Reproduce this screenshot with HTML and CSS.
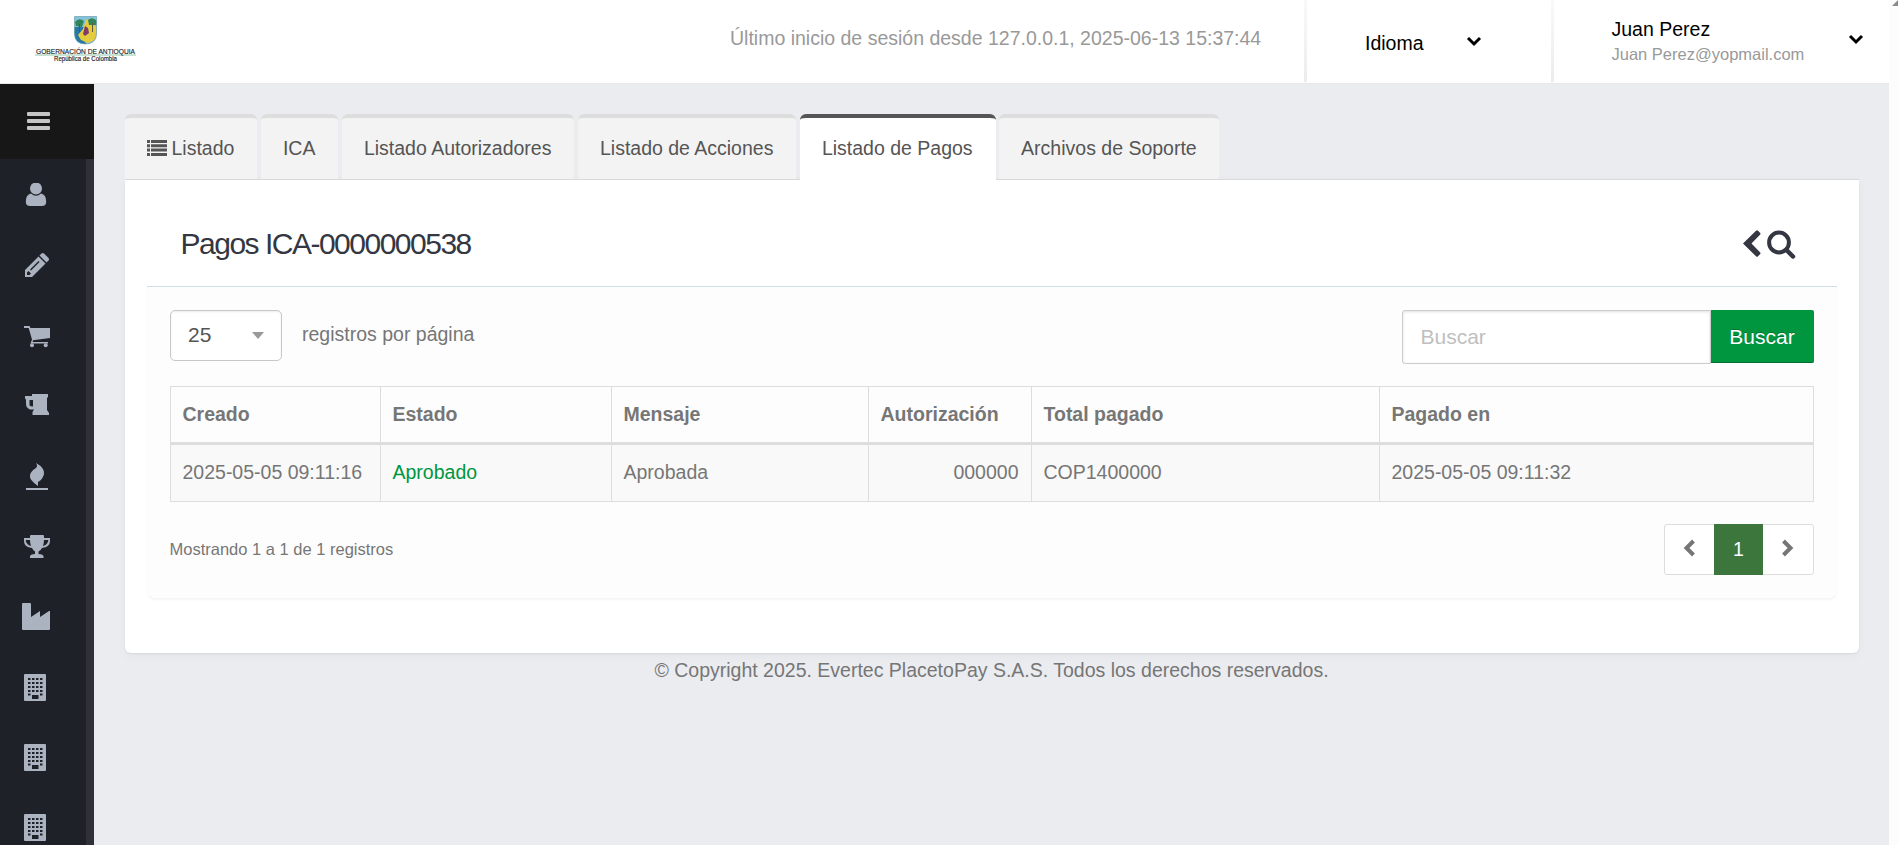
FILE: index.html
```html
<!DOCTYPE html>
<html lang="es">
<head>
<meta charset="utf-8">
<title>Pagos ICA-0000000538</title>
<link rel="stylesheet" href="styles.css">
</head>
<body>
<svg class="defs" width="0" height="0">
  <symbol id="building" viewBox="0 0 22 27">
    <path fill-rule="evenodd" d="M1 0h20q1 0 1 1v25q0 1-1 1H1q-1 0-1-1V1q0-1 1-1zM4 4v2h2.500V4zM8 4v2h2.500V4zM12 4v2h2.500V4zM16 4v2h2.500V4zM4 8v2h2.500V8zM8 8v2h2.500V8zM12 8v2h2.500V8zM16 8v2h2.500V8zM4 12v2h2.500v-2zM8 12v2h2.500v-2zM12 12v2h2.500v-2zM16 12v2h2.500v-2zM4 16v2h2.500v-2zM8 16v2h2.500v-2zM12 16v2h2.500v-2zM16 16v2h2.500v-2zM4 19.500v2h2.500v-2zM16 19.500v2h2.500v-2zM8 21v4h6.500v-4z"/>
  </symbol>
</svg>
<div class="page">
  <header class="topbar">
    <div class="brand">
      <svg width="104" height="56" viewBox="34 13 104 56">
        <clipPath id="shield"><path d="M74.500 16.500h22V33q0 11-11 11t-11-11z"/></clipPath>
        <g clip-path="url(#shield)">
          <path fill="#83c4dc" d="M74 16h23v29H74z"/>
          <path fill="#2678a5" d="M74 27h10l-3 9 6 9H74z"/>
          <path fill="#e5cb3e" d="M86 20l4-1 3 6 4 2v12l-9 4-7-3-3-5 5-6z"/>
          <path fill="#32845a" d="M75 22q4-5 9-1l-2 6-6-1zM88 20q4-4 9 1v4h-8z"/>
          <path fill="#803c66" d="M85 26l3 2 1 5-4 3-2-2z"/>
          <path fill="#5b5931" d="M79 24h1v8h-1zM92 23h1v9h-1z"/>
        </g>
        <path fill="none" stroke="#6f9eae" stroke-width=".7" d="M74.500 16.500h22V33q0 11-11 11t-11-11z"/>
        <path fill="#8fc7ac" d="M35 54.600h101v.9H35z"/>
        <text class="logo-name" x="36" y="54" textLength="99" lengthAdjust="spacingAndGlyphs">GOBERNACIÓN DE ANTIOQUIA</text>
        <text class="logo-sub" x="54" y="61.200" textLength="63" lengthAdjust="spacingAndGlyphs">República de Colombia</text>
      </svg>
    </div>
    <div class="last-login">Último inicio de sesión desde 127.0.0.1, 2025-06-13 15:37:44</div>
    <div class="language"><span>Idioma</span>
      <svg class="caret" width="16" height="11" viewBox="0 0 16 11"><path d="M2 2l6 6 6-6"/></svg>
    </div>
    <div class="account">
      <div class="who"><div class="name">Juan Perez</div><div class="mail">Juan Perez@yopmail.com</div></div>
      <svg class="caret" width="16" height="11" viewBox="0 0 16 11"><path d="M2 2l6 6 6-6"/></svg>
    </div>
  </header>
  <div class="body">
    <nav class="sidebar">
      <div class="toggle"><svg width="24" height="19" viewBox="0 0 24 19"><path d="M1 0h21q1 0 1 1v2q0 1-1 1H1Q0 4 0 3V1q0-1 1-1zM1 7h21q1 0 1 1v2q0 1-1 1H1q-1 0-1-1V8q0-1 1-1zM1 14h21q1 0 1 1v2q0 1-1 1H1q-1 0-1-1v-2q0-1 1-1z"/></svg></div>
      <ul class="menu">
        <li><svg width="28" height="28" viewBox="1 2.500 28 28"><path d="M14 2a6 6 0 0 1 0 12a6 6 0 0 1 0-12z"/><path d="M9 13q5 4.500 10 0q5.200 1 5.200 8q0 4.500-4.200 4.500H8q-4.200 0-4.200-4.500q0-7 5.200-8z"/></svg></li>
        <li><svg width="28" height="28" viewBox="1 1 28 28"><path fill-rule="evenodd" d="M2 18L15.500 4.500l7 7L9 25H2zM4 20.500v2.500h2.500l1.500-1.500L5.500 19zM7 17.500l1 1 8.500-8.500-1-1z"/><path d="M16.500 3.500L18.500 1.500q1.200-1 2.500 0l4.500 4.500q1 1.200 0 2.500L23.500 10.500z"/></svg></li>
        <li><svg width="28" height="28" viewBox="0 0 28 28"><path d="M1 3h5.500l1 2H27v10L10 17.300l-.4 1.700H25v1.400H7.500L9 16.500 5.700 5H1z"/><circle cx="9" cy="22.300" r="2"/><circle cx="22.700" cy="22.300" r="2"/></svg></li>
        <li><svg width="28" height="28" viewBox="0 1 28 28"><path fill-rule="evenodd" d="M9 2h16v3l-1 1v12l2 3v2H9.500v-3l1.500-2.500H7q-4-1.500-4-6V7.500L2 6.500V4h7zM6.500 8v5.500q1 1 3.500 1V8z"/></svg></li>
        <li><svg width="28" height="28" viewBox="0 0 28 28"><path d="M13 0q9 5 8 11q-1 5-6 8v4Q6 17 7 12q1-4 6-7q2-2 0-5zM3 25h22v2H3z"/></svg></li>
        <li><svg width="28" height="28" viewBox="0 0 28 28"><path fill-rule="evenodd" d="M7 3q0-1 1-1h12q1 0 1 1v2h6v3q0 6-8 7-1 2-3.500 3.500v2.500q4 0 5 2v2H7v-2q1-2 5-2v-2.500Q10 17 9 15q-8-1-8-7V5h6zM2.800 7v1q1 4 5.200 5Q7 10 7 7zM25.200 7H21q0 3-1 6 4.200-1 5.200-5z"/></svg></li>
        <li><svg width="28" height="28" viewBox="0 0 28 28"><path d="M0 1q0-1 1-1h7q1 0 1 1v13l9-6v6l9-6h1v18q0 1-1 1H1q-1 0-1-1z"/></svg></li>
        <li><svg width="22" height="27"><use href="#building"/></svg></li>
        <li><svg width="22" height="27"><use href="#building"/></svg></li>
        <li><svg width="22" height="27"><use href="#building"/></svg></li>
      </ul>
    </nav>
    <main class="content">
      <div class="tabs">
        <a class="tab"><svg class="list" width="20" height="16" viewBox="0 0 20 16"><path d="M0 0h3v3H0zM4 0h16v3H4zM0 4.300h3v3H0zM4 4.300h16v3H4zM0 8.600h3v3H0zM4 8.600h16v3H4zM0 13h3v3H0zM4 13h16v3H4z"/></svg><span>Listado</span></a>
        <a class="tab">ICA</a>
        <a class="tab">Listado Autorizadores</a>
        <a class="tab">Listado de Acciones</a>
        <a class="tab active">Listado de Pagos</a>
        <a class="tab">Archivos de Soporte</a>
      </div>
      <section class="panel">
        <div class="panel-head">
          <h3>Pagos ICA-0000000538</h3>
          <div class="actions">
            <svg width="18" height="28" viewBox="0 0 18 28"><path d="M0 13.500L13 .7q1-1 2 0l2 2q1 1 0 2L8.500 13.500l8.500 8.800q1 1 0 2l-2 2q-1 1-2 0z"/></svg>
            <svg width="29" height="29" viewBox="0 0 29 29"><circle cx="12" cy="12.500" r="9.900" fill="none" stroke="#343741" stroke-width="4"/><path d="M19.500 20l6.500 6.500" stroke="#343741" stroke-width="4.500" stroke-linecap="round"/></svg>
          </div>
        </div>
        <div class="panel-body">
          <div class="controls">
            <div class="select"><span>25</span><i class="arrow"></i></div>
            <span class="per-page">registros por página</span>
            <div class="search"><input type="text" placeholder="Buscar"><button>Buscar</button></div>
          </div>
          <table>
            <colgroup><col class="c1"><col class="c2"><col class="c3"><col class="c4"><col class="c5"><col class="c6"></colgroup>
            <thead><tr><th>Creado</th><th>Estado</th><th>Mensaje</th><th>Autorización</th><th>Total pagado</th><th>Pagado en</th></tr></thead>
            <tbody><tr><td>2025-05-05 09:11:16</td><td class="ok">Aprobado</td><td>Aprobada</td><td class="num">000000</td><td>COP1400000</td><td>2025-05-05 09:11:32</td></tr></tbody>
          </table>
          <div class="table-foot">
            <span class="summary">Mostrando 1 a 1 de 1 registros</span>
            <div class="pager">
              <span><svg width="13" height="18" viewBox="0 0 13 18"><path d="M10.500 2L3.500 9l7 7"/></svg></span>
              <span class="current">1</span>
              <span><svg width="13" height="18" viewBox="0 0 13 18"><path d="M2.500 2l7 7-7 7"/></svg></span>
            </div>
          </div>
        </div>
      </section>
      <footer>© Copyright 2025. Evertec PlacetoPay S.A.S. Todos los derechos reservados.</footer>
    </main>
  </div>
</div>
<div class="scrollbar"><i></i></div>
</body>
</html>
```
FILE: styles.css
```css
* { box-sizing: border-box; }
html, body { height: 100%; margin: 0; }
body {
  display: flex;
  overflow: hidden;
  background: #ebecf0;
  color: #767676;
  font: 19.5px/28px "Liberation Sans", Arial, sans-serif;
}
.defs { position: absolute; }
.page { width: 1889px; height: 845px; display: flex; flex-direction: column; }
.scrollbar { width: 9px; background: #fcfcfc; display: flex; justify-content: flex-end; }
.scrollbar i { width: 0; height: 0; border-left: 6px solid transparent; border-bottom: 6px solid #8b8b8b; }

.topbar { flex: none; display: flex; height: 84px; background: #fff; border-bottom: 1px solid #e7e7e8; }
.brand { width: 730px; padding: 13px 0 0 34px; }
.brand svg { display: block; overflow: visible; }
.logo-name { font-size: 7.600px; fill: #222; stroke: #222; stroke-width: .15px; }
.logo-sub { font-size: 6.900px; fill: #222; stroke: #222; stroke-width: .15px; }
.last-login { width: 574px; padding-top: 24px; color: #999; white-space: nowrap; }
.language, .account {
  display: flex;
  height: 82px;
  border-left: 3px solid;
  border-image: linear-gradient(#f9f9f9, #ececec) 1;
  color: #000;
}
.language { width: 247px; padding: 29px 0 0 58px; gap: 42px; }
.language .caret { margin-top: 7px; }
.account { flex: 1; padding: 15px 25px 0 57.500px; justify-content: space-between; }
.account .caret { margin-top: 19px; }
.mail { color: #999; font-size: 16.500px; line-height: 22px; }
.caret path { fill: none; stroke: #000; stroke-width: 3; }

.body { flex: 1; min-height: 0; display: flex; }
.sidebar { width: 94px; flex: none; overflow: hidden; background: #1e2128; }
.toggle { height: 75px; padding: 28px 0 0 27px; background: #171717; }
.toggle svg { display: block; fill: #c5c5c5; }
.menu { height: 750px; margin: 0; padding: 24px 0 0 22px; list-style: none; border-right: 8px solid #2f3038; }
.menu li { height: 70px; padding-left: 2px; }
.menu li:nth-child(3), .menu li:nth-child(4) { padding-left: 1px; }
.menu li:nth-child(1), .menu li:nth-child(5), .menu li:nth-child(6) { padding-left: 1px; }
.menu li:nth-child(7) { padding-left: 0; }
.menu li:nth-child(n+8) { padding-top: 1px; }
.menu svg { display: block; fill: #abb3c0; }

.content { flex: 1; padding: 30px 30.500px 0 30.500px; }
.tabs { display: flex; gap: 3.500px; height: 65px; }
.tab {
  display: flex;
  align-items: center;
  height: 65px;
  padding: 4px 22.500px 5px 22px;
  background: #f3f3f3;
  border-top: 4px solid #ddd;
  border-radius: 6px 6px 0 0;
  color: #555;
  white-space: nowrap;
}
.tab:not(:last-child) { padding-right: 23px; }
.tab .list { margin-right: 5px; fill: #555; }
.tab.active { height: 66px; padding-bottom: 6px; background: #fff; border-color: #555; z-index: 1; }
.panel {
  height: 474px;
  padding: 0 22px;
  background: #fff;
  border-top: 1px solid #d9d9d9;
  border-radius: 0 0 6px 6px;
  box-shadow: 0 3px 10px rgba(0, 0, 0, .04), 0 1px 2px rgba(0, 0, 0, .05);
}
.panel-head { display: flex; justify-content: space-between; height: 107px; padding: 46px 41px 0 34px; border-bottom: 1px solid #cddfe9; }
h3 { margin: 0; color: #343741; font-size: 30px; font-weight: 400; line-height: 36px; letter-spacing: -1.500px; }
.actions { display: flex; gap: 6px; padding-top: 4px; fill: #343741; }
.panel-body { height: 311px; padding: 23px 23px 0; background: #fdfdfd; border-radius: 0 0 8px 8px; box-shadow: 0 2px 2px rgba(0, 0, 0, .04); }
.controls { display: flex; height: 76px; align-items: flex-start; }
.select {
  display: flex;
  justify-content: space-between;
  align-items: center;
  width: 112px;
  height: 51px;
  padding: 0 17px 1px 17.500px;
  border: 1px solid #c8c8c8;
  border-radius: 5px;
  background: #fff;
  box-shadow: inset 0 1px 2px rgba(0, 0, 0, .08);
  color: #555;
  font-size: 21px;
}
.arrow { border: 6px solid transparent; border-top: 7px solid #999; border-bottom: 0; }
.per-page { margin: 10px 0 0 20.500px; }
.search { display: flex; margin-left: auto; }
.search input {
  width: 309px;
  height: 54px;
  padding: 0 18px;
  border: 1px solid #ccc;
  border-radius: 3px 0 0 3px;
  background: #fff;
  box-shadow: inset 0 1px 3px rgba(0, 0, 0, .12);
  font: 21px "Liberation Sans", Arial, sans-serif;
}
.search input::placeholder { color: #bfbfbf; opacity: 1; }
.search button {
  width: 103px;
  height: 53px;
  padding: 1px 0 0;
  border: 0;
  border-bottom: 1px solid #006e2e;
  border-radius: 0 2px 2px 0;
  background: #009640;
  color: #fff;
  font: 21px "Liberation Sans", Arial, sans-serif;
  text-shadow: 0 -1px 0 rgba(0, 0, 0, .25);
}
table { width: 1643px; height: 116px; table-layout: fixed; border-collapse: collapse; }
.c1 { width: 210px; } .c2 { width: 231px; } .c3 { width: 257px; }
.c4 { width: 163px; } .c5 { width: 348px; } .c6 { width: 434px; }
th, td { padding: 0 12px 2px; border: 1px solid #ddd; text-align: left; }
th { height: 57px; border-bottom: 3px solid #ddd; font-weight: 700; }
td { height: 58px; background: #f9f9f9; }
td.ok { color: #009640; }
td.num { text-align: right; }
.table-foot { display: flex; justify-content: space-between; padding-top: 22px; }
.summary { padding-top: 11px; font-size: 16.500px; }
.pager { display: flex; width: 150px; height: 51px; border: 1px solid #ddd; border-radius: 3px; background: #fff; }
.pager span { flex: 1; display: flex; align-items: center; justify-content: center; }
.pager svg { margin-top: -3px; fill: none; stroke: #767676; stroke-width: 4; }
.pager .current { margin: -1px 0; padding-bottom: 2px; background: #3c763d; color: #fff; }
footer { padding-top: 3px; text-align: center; }
```
